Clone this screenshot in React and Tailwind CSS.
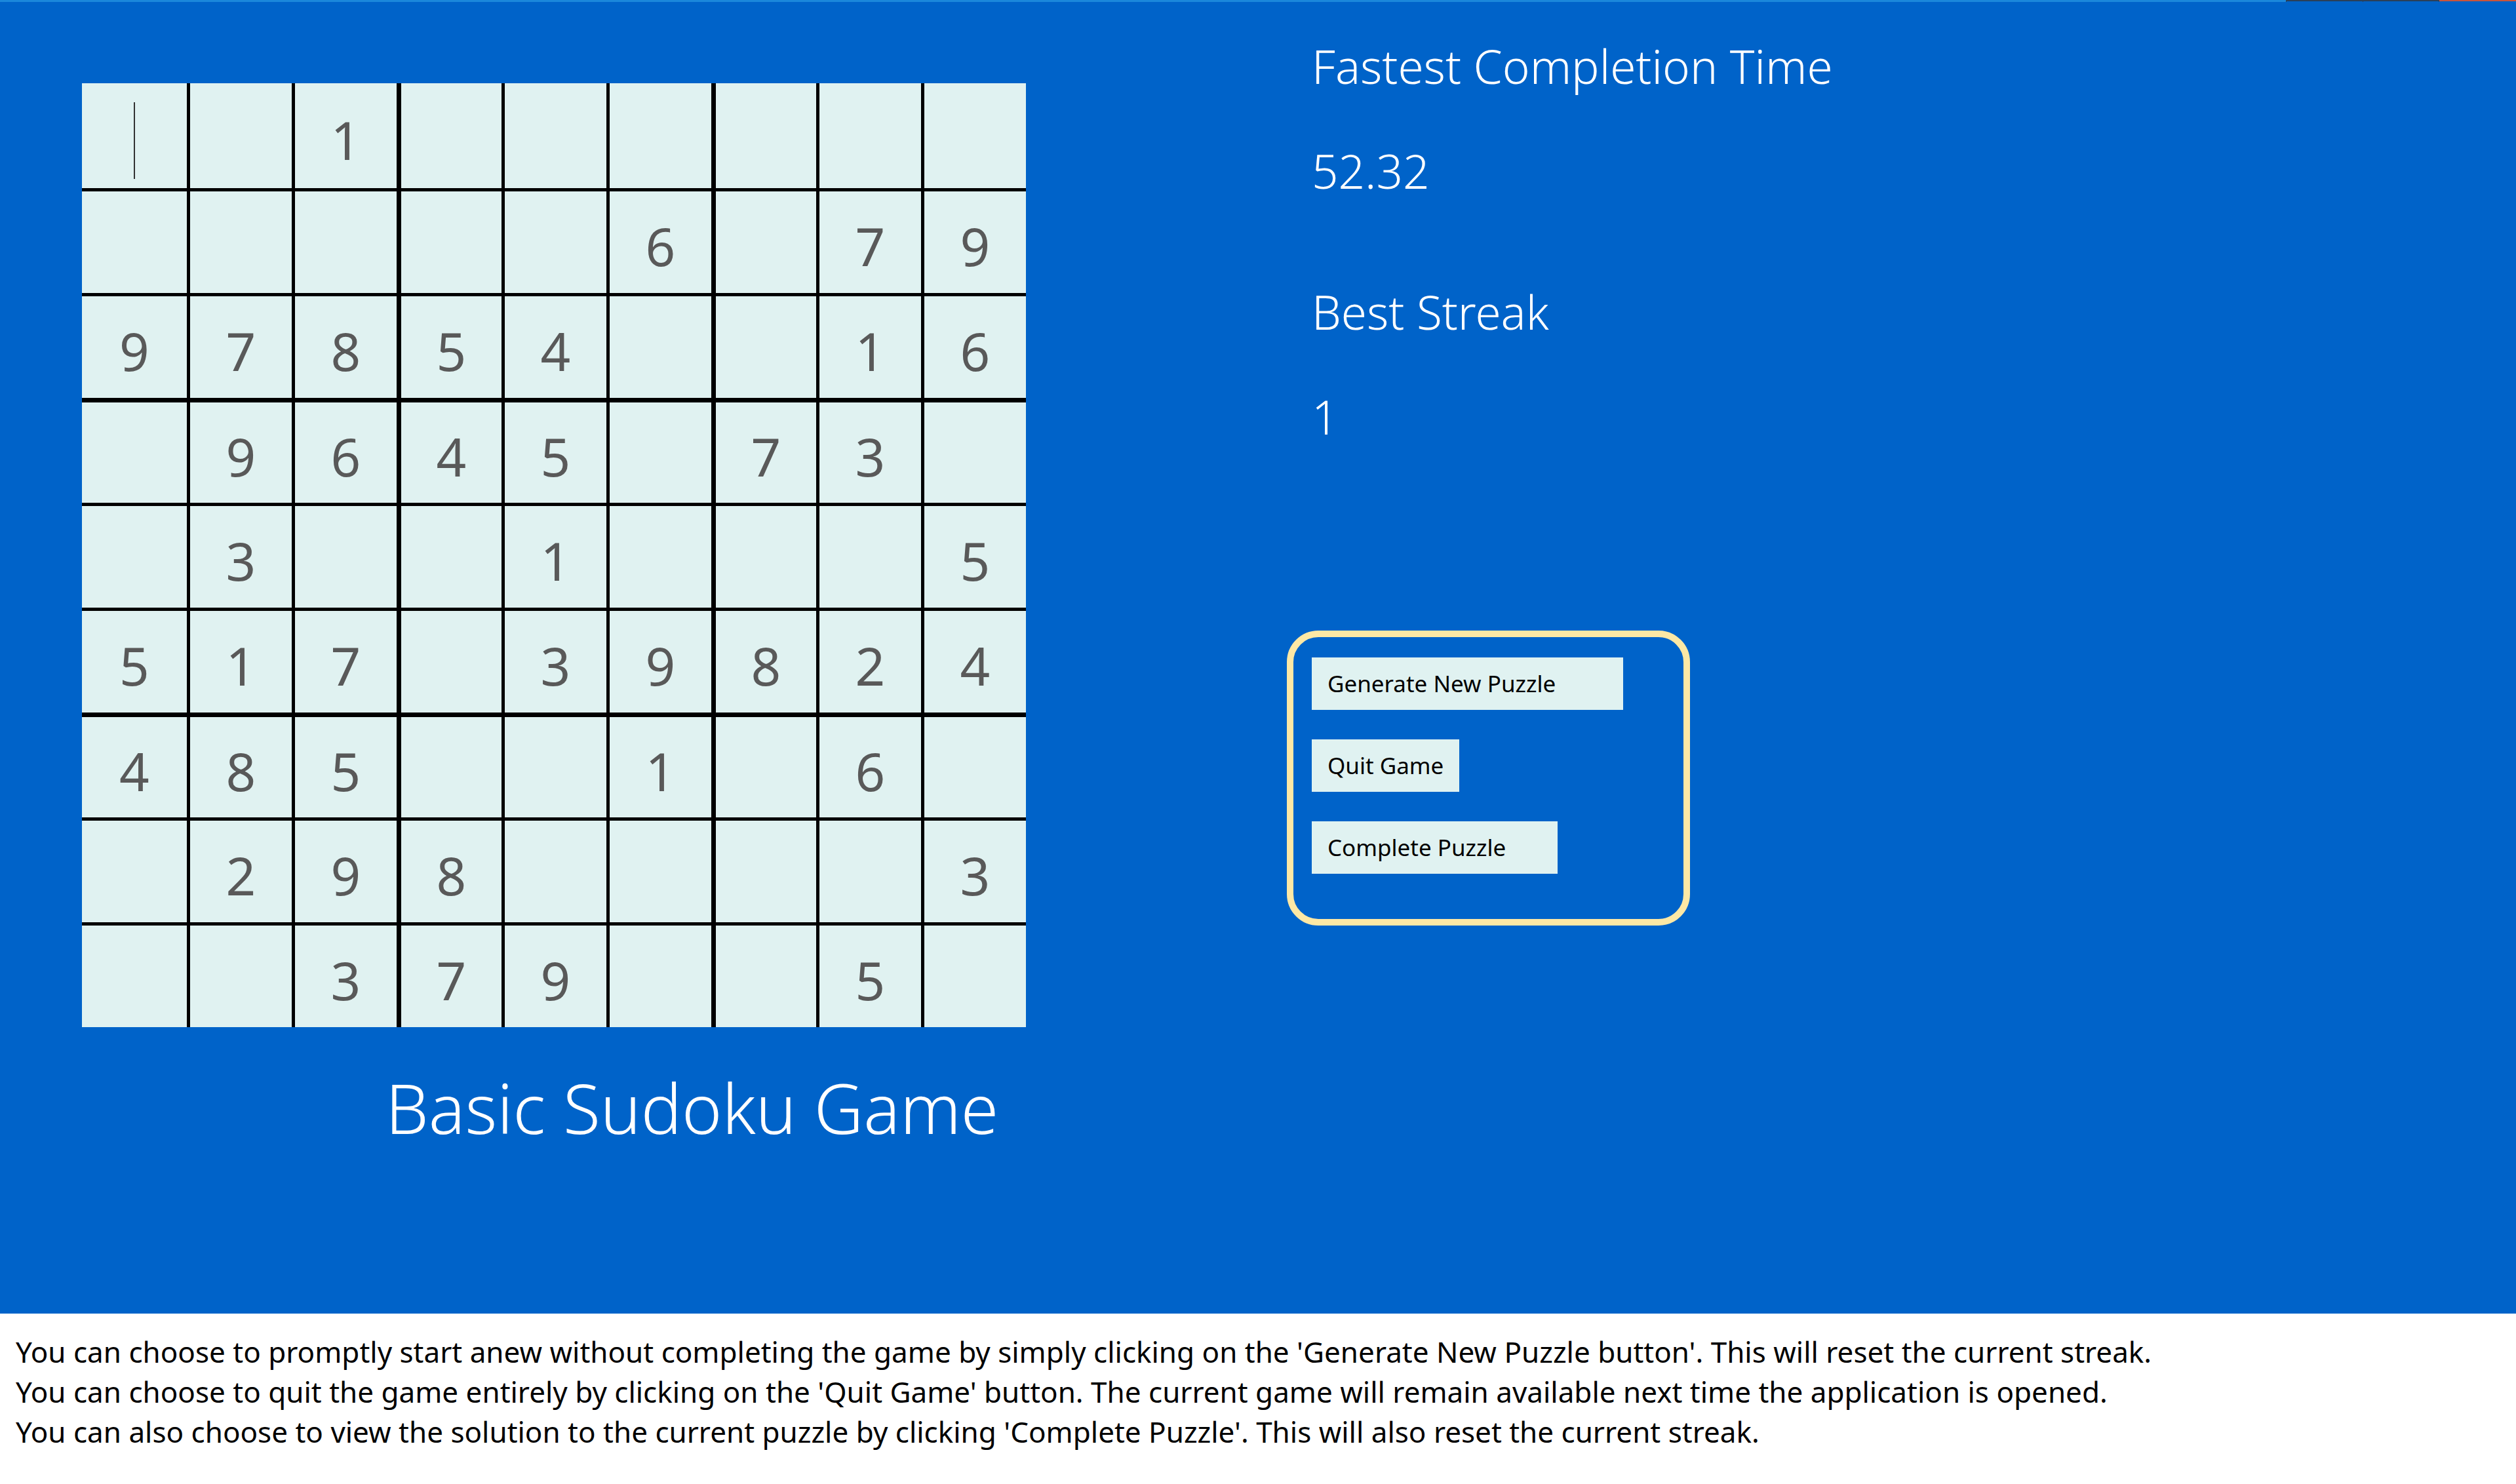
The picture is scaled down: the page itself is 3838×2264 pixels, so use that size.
import React from 'react'

const puzzle = [
  [0, 0, 1, 0, 0, 0, 0, 0, 0],
  [0, 0, 0, 0, 0, 6, 0, 7, 9],
  [9, 7, 8, 5, 4, 0, 0, 1, 6],
  [0, 9, 6, 4, 5, 0, 7, 3, 0],
  [0, 3, 0, 0, 1, 0, 0, 0, 5],
  [5, 1, 7, 0, 3, 9, 8, 2, 4],
  [4, 8, 5, 0, 0, 1, 0, 6, 0],
  [0, 2, 9, 8, 0, 0, 0, 0, 3],
  [0, 0, 3, 7, 9, 0, 0, 5, 0],
]

const font = { fontFamily: '"Noto Sans", "Open Sans", sans-serif' }

function Cell({ r, c, value }) {
  // thicker rule every third cell, none on the outer edge
  const left = c === 0 ? 'border-l-0' : c % 3 === 0 ? 'border-l-[7px]' : 'border-l-[5px]'
  const top = r === 0 ? 'border-t-0' : r % 3 === 0 ? 'border-t-[7px]' : 'border-t-[5px]'
  return (
    <div className={`relative flex h-[160px] w-[160px] items-center justify-center border-solid border-black bg-[#e0f2f1] pt-[11px] text-[80px] leading-none text-[#595959] ${left} ${top}`}>
      {value ? value : ''}
      {r === 0 && c === 0 && <span className="absolute left-[79px] top-[29px] h-[117px] w-[2px] bg-[#333]" />}
    </div>
  )
}

function Board() {
  return (
    <div className="grid w-[1440px] grid-cols-9">
      {puzzle.map((row, r) =>
        row.map((v, c) => <Cell key={`${r}-${c}`} r={r} c={c} value={v} />)
      )}
    </div>
  )
}

function Stat({ children, className = '' }) {
  return <div className={`text-[71px] font-light leading-[70px] text-white ${className}`}>{children}</div>
}

export default function App() {
  return (
    <div className="flex h-[2264px] w-[3838px] flex-col bg-white" style={font}>
      <div className="flex h-[3px] bg-[#0063c9]">
        <div className="flex-1 bg-[#1b88db]" />
        <div className="w-[118px] border-x border-t-2 border-[#2b4058]" />
        <div className="w-[116px] border-r border-t-2 border-[#2b4058]" />
        <div className="w-[117px] border-t-2 border-[#c8553d]" />
      </div>

      <div className="flex h-[2001px] bg-[#0063c9]">
        <div className="pl-[125px] pt-[124px]">
          <Board />
          <div className="mt-[71px] pl-[463px] text-[104px] font-light leading-none text-white">Basic Sudoku Game</div>
        </div>

        <div className="ml-[398px] pt-[63px]">
          <div className="pl-[38px]">
            <Stat>Fastest Completion Time</Stat>
            <Stat className="mt-[90px]">52.32</Stat>
            <Stat className="mt-[145px]">Best Streak</Stat>
            <Stat className="mt-[90px]">1</Stat>
          </div>

          <div className="mt-[291px] flex h-[450px] w-[615px] flex-col items-start gap-[45px] rounded-[48px] border-[10px] border-[#fde8a5] pl-[28px] pt-[31px]">
            <button className="flex h-[80px] w-[475px] items-center bg-[#e0f2f1] pl-[24px] text-[35px] text-black">Generate New Puzzle</button>
            <button className="flex h-[80px] w-[225px] items-center bg-[#e0f2f1] pl-[24px] text-[35px] text-black">Quit Game</button>
            <button className="flex h-[80px] w-[375px] items-center bg-[#e0f2f1] pl-[24px] text-[35px] text-black">Complete Puzzle</button>
          </div>
        </div>
      </div>

      <div className="pl-[24px] pt-[28px] text-[44px] leading-[61px] text-black">
        <p>You can choose to promptly start anew without completing the game by simply clicking on the 'Generate New Puzzle button'. This will reset the current streak.</p>
        <p>You can choose to quit the game entirely by clicking on the 'Quit Game' button. The current game will remain available next time the application is opened.</p>
        <p>You can also choose to view the solution to the current puzzle by clicking 'Complete Puzzle'. This will also reset the current streak.</p>
      </div>
    </div>
  )
}
